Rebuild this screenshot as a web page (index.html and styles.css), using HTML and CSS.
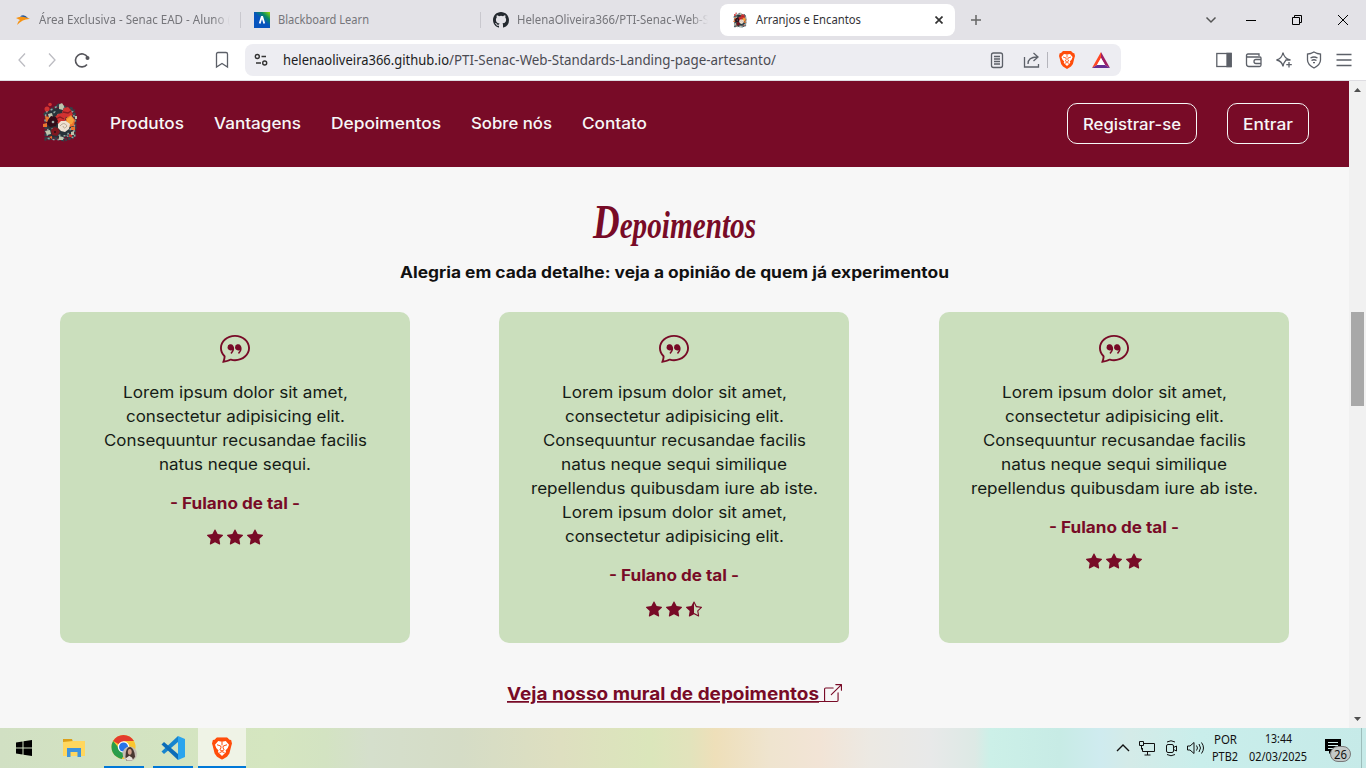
FILE: index.html
```html
<!DOCTYPE html>
<html lang="pt-BR">
<head>
<meta charset="utf-8">
<title>Arranjos e Encantos</title>
<link rel="stylesheet" href="styles.css">
</head>
<body>
<svg class="defs" width="0" height="0">
  <symbol id="quote" viewBox="0 0 16 16"><path d="M2.678 11.894a1 1 0 0 1 .287.801 11 11 0 0 1-.398 2c1.395-.323 2.247-.697 2.634-.893a1 1 0 0 1 .71-.074A8 8 0 0 0 8 14c3.996 0 7-2.807 7-6s-3.004-6-7-6-7 2.808-7 6c0 1.468.617 2.83 1.678 3.894m-.493 3.905a22 22 0 0 1-.713.129c-.2.032-.352-.176-.273-.362a10 10 0 0 0 .244-.637l.003-.01c.248-.72.45-1.548.524-2.319C.743 11.37 0 9.76 0 8c0-3.866 3.582-7 8-7s8 3.134 8 7-3.582 7-8 7a9 9 0 0 1-2.347-.306c-.52.263-1.639.742-3.468 1.105"/><path d="M7.066 6.76A1.665 1.665 0 0 0 4 7.668a1.667 1.667 0 0 0 2.561 1.406c-.131.389-.375.804-.777 1.22a.417.417 0 0 0 .6.58c1.486-1.54 1.293-3.214.682-4.112zm4 0A1.665 1.665 0 0 0 8 7.668a1.667 1.667 0 0 0 2.561 1.406c-.131.389-.375.804-.777 1.22a.417.417 0 0 0 .6.58c1.486-1.54 1.293-3.214.682-4.112z"/></symbol>
  <symbol id="star" viewBox="0 0 16 16"><path d="M3.612 15.443c-.386.198-.824-.149-.746-.592l.83-4.73L.173 6.765c-.329-.314-.158-.888.283-.95l4.898-.696L7.538.792c.197-.39.73-.39.927 0l2.184 4.327 4.898.696c.441.062.612.636.282.95l-3.522 3.356.83 4.73c.078.443-.36.79-.746.592L8 13.187l-4.389 2.256z"/></symbol>
  <symbol id="half" viewBox="0 0 16 16"><path d="M5.354 5.119 7.538.792A.52.52 0 0 1 8 .5c.183 0 .366.097.465.292l2.184 4.327 4.898.696A.54.54 0 0 1 16 6.32a.55.55 0 0 1-.17.445l-3.523 3.356.83 4.73c.078.443-.36.79-.746.592L8 13.187l-4.389 2.256a.5.5 0 0 1-.146.05c-.342.06-.668-.254-.6-.642l.83-4.73L.173 6.765a.55.55 0 0 1-.172-.403.6.6 0 0 1 .085-.302.51.51 0 0 1 .37-.245zM8 12.027a.5.5 0 0 1 .232.056l3.686 1.894-.694-3.957a.56.56 0 0 1 .162-.505l2.907-2.77-4.052-.576a.53.53 0 0 1-.393-.288L8.001 2.223 8 2.226z"/></symbol>
  <symbol id="brave" viewBox="0 0 16 18"><path fill="#ff4d0b" d="M4 0h8l2 2 1.300.2L16 5l-.6 2-1.500 6L12 15.500 8 18l-4-2.500L2.100 13 .6 7 0 5l.7-2.800L2 2z"/><path fill="#fff" d="M5 3l3 .6L11 3l2.600 3-1 2.500-1.800 2 .5 1.200L8 15l-3.300-3.300.5-1.200-1.800-2-1-2.500z"/><path fill="none" stroke="#ff4d0b" stroke-width=".8" d="M4 6l3 1 .2 1.500L6.300 10 8 11l1.700-1-.9-1.500L9 7l3-1M6 12.300l2-.8 2 .8M8 3.500v3"/></symbol>
  <symbol id="bouquet" viewBox="0 0 36 40">
    <g fill="none" stroke="#31444a" stroke-width="3" stroke-dasharray="3 1 2 1"><path d="M3 12l6-4 8-5 7 3 7 1 2 8v10l-1 10-10 3-9-2-9 1V15z"/></g>
    <path fill="#273239" d="M6 9l10-3 14 2 2 12-2 14-12 2-13-2z"/>
    <g fill="none" stroke="#8fa5a0" stroke-width="1.500" stroke-dasharray="2 3"><path d="M4 10l7-3 8-5 4 5 8 3 2 8-1 10 1 8-8-2-5 3-7 1-8-2 1-8-3-8zM7 13l6-3 10 8 6 8-4 8-10-1-7-9"/></g>
    <g fill="#d13231"><circle cx="5" cy="7" r="2.500"/><circle cx="8" cy="2.500" r="1.800"/><path d="M13 15l3-3 4-1 4 3-1 6-6 2-4-3zM20 10l2-4 4-1 3 3 2 5-4 3-5-2z"/><path d="M27 32h3v3h-3z"/></g>
    <path d="M14 17l4-2 4 2m-1-7l5 1 3-2" stroke="#861c22" stroke-width="1.300" fill="none"/>
    <g fill="#bfc4ad"><path d="M17 3l3-2 2 3-1 4-4-1zM6 12l4-1 1 4-4 1zM3 29l5-1 1 4-4 1zM17 34l4 1v3h-4zM33 14h2v3h-2zM29 30l3-1v4h-3z"/></g>
    <g fill="#ed742d"><path d="M3 14l4 1 1 4-4 1zM1 22l4-1v4H1zM24 16l5-3 4 5-1 6-5 1-3-4zM29 25h4v3h-4zM7 35l3-1v3z"/></g>
    <path fill="#f5a43b" d="M25 17l4-3 3 4-2 4-5 1z"/>
    <path fill="#310c18" d="M6 18l3-4 5 1 2 4-2 5-6 1-3-3z"/><path fill="#7d1820" d="M9 28l3-3 4 1 2 4-3 4-5-1z"/><circle cx="11" cy="20" r="1.300" fill="#9eaaa5"/><circle cx="13" cy="30" r="1" fill="#291015"/>
    <path fill="#ede1d2" d="M16 22l3-3 5 0 4 3-1 5-4 3-4-1-3-3z"/><path d="M18 24q4-5 7 0-3 4-4 0" fill="none" stroke="#b9a996"/>
  </symbol>
</svg>

<div class="tabstrip">
  <div class="tab first">
    <svg width="16" height="16" viewBox="0 0 16 16"><path fill="#f69314" d="M1 6q8-3 14 1-7-.5-13 6 1-4 3-5z"/><path fill="#28599a" d="M5 4.500q4-3 8 1.500-4-1.500-8-1.500"/></svg>
    <span class="clip"><svg class="ui" width="192" height="16"><text y="12" textLength="192" lengthAdjust="spacingAndGlyphs">Área Exclusiva - Senac EAD - Aluno (</text></svg></span>
  </div>
  <div class="tab">
    <svg width="16" height="16" viewBox="0 0 16 16"><defs><linearGradient id="bb" x1="1" y1="0" x2=".3" y2=".8"><stop offset="0" stop-color="#9bdc00"/><stop offset=".35" stop-color="#078b62"/><stop offset=".65" stop-color="#0754bd"/></linearGradient></defs><path fill="url(#bb)" d="M0 0h16v16H0z"/><path fill="none" stroke="#fff" stroke-width="1.800" d="M5.700 11.500l2-6.500h.6l2 6.500"/></svg>
    <svg class="ui" width="91" height="16"><text y="12" textLength="91" lengthAdjust="spacingAndGlyphs">Blackboard Learn</text></svg>
  </div>
  <div class="tab third">
    <svg width="16" height="16" viewBox="0 0 16 16" fill="#24292f"><path d="M8 0C3.580 0 0 3.580 0 8c0 3.540 2.290 6.530 5.470 7.590.4.070.55-.17.55-.38 0-.19-.01-.82-.01-1.490-2.010.37-2.530-.49-2.690-.94-.09-.23-.48-.94-.82-1.130-.28-.15-.68-.52-.01-.53.63-.01 1.080.58 1.230.82.72 1.210 1.870.87 2.330.66.070-.52.28-.87.51-1.070-1.780-.2-3.640-.89-3.640-3.950 0-.87.31-1.590.82-2.150-.08-.2-.36-1.020.08-2.120 0 0 .67-.21 2.200.82a7.600 7.600 0 0 1 4 0c1.530-1.040 2.200-.82 2.200-.82.44 1.100.16 1.920.08 2.120.51.56.82 1.270.82 2.150 0 3.070-1.870 3.750-3.650 3.950.29.25.54.73.54 1.480 0 1.070-.01 1.930-.01 2.200 0 .21.15.46.55.38A8 8 0 0 0 16 8c0-4.420-3.580-8-8-8"/></svg>
    <span class="clip"><svg class="ui" width="192" height="16"><text y="12" textLength="192" lengthAdjust="spacingAndGlyphs">HelenaOliveira366/PTI-Senac-Web-S</text></svg></span>
  </div>
  <div class="tab active">
    <svg width="14" height="16"><use href="#bouquet"/></svg>
    <svg class="ui" width="105" height="16"><text y="12" textLength="105" lengthAdjust="spacingAndGlyphs">Arranjos e Encantos</text></svg>
    <svg class="tabclose" width="8" height="8"><path d="M.5.500l7 7m0-7l-7 7" stroke="#333" stroke-width="1.700"/></svg>
  </div>
  <svg class="plus" width="12" height="12"><path d="M6 1v10M1 6h10" stroke="#666" stroke-width="1.500"/></svg>
  <div class="wincontrols">
    <svg width="34" height="20" fill="none" stroke="#555" stroke-width="1.500"><path d="M12.500 7.500l4.500 4.500 4.500-4.500"/></svg>
    <svg width="46" height="20"><path d="M18 10.500h10" stroke="#000"/></svg>
    <svg width="46" height="20" fill="none" stroke="#000"><path d="M18.500 7.500h7v7h-7zM20.500 7v-1.500h7v7H26"/></svg>
    <svg width="46" height="20" stroke="#000"><path d="M18 5l10 10m0-10L18 15"/></svg>
  </div>
</div>

<div class="toolbar">
  <div class="history">
    <svg width="24" height="24"><path d="M15 5.500L9 12l6 6.500"/></svg>
    <svg width="24" height="24"><path d="M9 5.500l6 6.500-6 6.500"/></svg>
    <svg class="reload" width="24" height="24"><path d="M17 16.500A6.500 6.500 0 1 1 17.500 9"/><circle cx="17.500" cy="10" r="2" fill="#55555b" stroke="none"/></svg>
  </div>
  <svg class="bookmark" width="24" height="24"><path d="M6.500 6Q6.500 4.500 8 4.500h8q1.500 0 1.500 1.500v13L12 15.500 6.500 19z"/></svg>
  <div class="address">
    <svg width="16" height="16" viewBox="0 0 16 16"><g stroke="#333" stroke-width="1.400"><circle cx="4.300" cy="4.500" r="2"/><circle cx="11.700" cy="11" r="2"/><path d="M8.500 4.500H13M3 11h5"/></g></svg>
    <svg class="url" width="493" height="20"><text y="15" textLength="166" lengthAdjust="spacingAndGlyphs">helenaoliveira366.github.io</text><text class="path" x="166" y="15" textLength="327" lengthAdjust="spacingAndGlyphs">/PTI-Senac-Web-Standards-Landing-page-artesanto/</text></svg>
    <div class="pageactions">
      <svg width="24" height="24"><rect x="6.500" y="5" width="11" height="14.500" rx="2"/><path d="M9 8.500h6M9 11h6M9 13.500h6M9 16h6"/></svg>
      <svg width="24" height="24"><path d="M4.500 9v10h14v-3M8 16q0-7 9-7M13.500 5l4.500 4-4.500 4"/></svg>
      <i class="vr"></i>
      <svg class="flat bravelogo" width="16" height="18"><use href="#brave"/></svg>
      <svg class="flat" width="18" height="16"><path fill="#ff4724" d="M9 0L0 16l5-3 4-7z"/><path fill="#9e1f63" d="M9 0l9 16-5-3-4-7z"/><path fill="#662d91" d="M0 16h18l-5-3H5z"/><path fill="#fff" d="M9 6l4 7H5z"/></svg>
    </div>
  </div>
  <div class="extras">
    <svg width="24" height="24"><rect x="4.800" y="5.500" width="14.400" height="13"/><path fill="#5c6068" d="M15 5.500h4v13h-4z"/></svg>
    <svg width="24" height="24"><path d="M17 8V6H6Q4.500 6 4.500 7.500T6 9h12q1 0 1 1v7q0 1.500-1.500 1.500H7q-2.500 0-2.500-2.500V7.500M19 11.500h-5a2 2 0 0 0 0 4h5"/></svg>
    <svg width="24" height="24"><path d="M11 4.500q1 6 7.500 7.500H14l-1 1.500q-1.500 1.500-2 5-1-5.500-6.500-6.500Q10 10.500 11 4.500M17 14v5.500M14.300 16.700h5.500"/></svg>
    <svg width="24" height="24"><path d="M12 4l3.500 1.500 3 .5v6q0 4.500-6.500 8-6.500-3.500-6.500-8V6l3-.5zM8.500 10q3.500-2 7 0M9.500 12.500q2.500-1.500 5 0M11 14.700h2"/></svg>
    <svg width="24" height="24"><path d="M4.500 6.500h15M4.500 12h15M4.500 17.500h15"/></svg>
  </div>
</div>

<div class="viewport">
  <div class="page">
    <nav class="nav">
      <svg class="logo" width="36" height="40"><use href="#bouquet"/></svg>
      <div class="links">
        <svg class="m medium" width="74" height="24"><text y="17" textLength="74" lengthAdjust="spacingAndGlyphs">Produtos</text></svg>
        <svg class="m medium" width="87" height="24"><text y="17" textLength="87" lengthAdjust="spacingAndGlyphs">Vantagens</text></svg>
        <svg class="m medium" width="110" height="24"><text y="17" textLength="110" lengthAdjust="spacingAndGlyphs">Depoimentos</text></svg>
        <svg class="m medium" width="81" height="24"><text y="17" textLength="81" lengthAdjust="spacingAndGlyphs">Sobre nós</text></svg>
        <svg class="m medium" width="65" height="24"><text y="17" textLength="65" lengthAdjust="spacingAndGlyphs">Contato</text></svg>
      </div>
      <a class="btn"><svg class="m medium" width="98" height="24"><text y="18" textLength="98" lengthAdjust="spacingAndGlyphs">Registrar-se</text></svg></a>
      <a class="btn last"><svg class="m medium" width="50" height="24"><text y="18" textLength="50" lengthAdjust="spacingAndGlyphs">Entrar</text></svg></a>
    </nav>
    <main>
      <svg class="title" width="168" height="60"><text x="2" y="44" textLength="163" lengthAdjust="spacingAndGlyphs"><tspan class="initial">D</tspan>epoimentos</text></svg>
      <svg class="m bold subtitle" width="549" height="24"><text y="17" textLength="549" lengthAdjust="spacingAndGlyphs">Alegria em cada detalhe: veja a opinião de quem já experimentou</text></svg>
      <div class="cards">
        <article class="card">
          <svg class="quote" width="30" height="30"><use href="#quote"/></svg>
          <div class="copy">
            <svg class="m" width="225" height="24"><text y="17" textLength="225" lengthAdjust="spacingAndGlyphs">Lorem ipsum dolor sit amet,</text></svg>
            <svg class="m" width="219" height="24"><text y="17" textLength="219" lengthAdjust="spacingAndGlyphs">consectetur adipisicing elit.</text></svg>
            <svg class="m" width="263" height="24"><text y="17" textLength="263" lengthAdjust="spacingAndGlyphs">Consequuntur recusandae facilis</text></svg>
            <svg class="m" width="152" height="24"><text y="17" textLength="152" lengthAdjust="spacingAndGlyphs">natus neque sequi.</text></svg>
          </div>
          <svg class="m bold author" width="130" height="24"><text y="17" textLength="130" lengthAdjust="spacingAndGlyphs">- Fulano de tal -</text></svg>
          <div class="stars"><svg><use href="#star"/></svg><svg><use href="#star"/></svg><svg><use href="#star"/></svg></div>
        </article>
        <article class="card">
          <svg class="quote" width="30" height="30"><use href="#quote"/></svg>
          <div class="copy">
            <svg class="m" width="225" height="24"><text y="17" textLength="225" lengthAdjust="spacingAndGlyphs">Lorem ipsum dolor sit amet,</text></svg>
            <svg class="m" width="219" height="24"><text y="17" textLength="219" lengthAdjust="spacingAndGlyphs">consectetur adipisicing elit.</text></svg>
            <svg class="m" width="263" height="24"><text y="17" textLength="263" lengthAdjust="spacingAndGlyphs">Consequuntur recusandae facilis</text></svg>
            <svg class="m" width="226" height="24"><text y="17" textLength="226" lengthAdjust="spacingAndGlyphs">natus neque sequi similique</text></svg>
            <svg class="m" width="287" height="24"><text y="17" textLength="287" lengthAdjust="spacingAndGlyphs">repellendus quibusdam iure ab iste.</text></svg>
            <svg class="m" width="225" height="24"><text y="17" textLength="225" lengthAdjust="spacingAndGlyphs">Lorem ipsum dolor sit amet,</text></svg>
            <svg class="m" width="219" height="24"><text y="17" textLength="219" lengthAdjust="spacingAndGlyphs">consectetur adipisicing elit.</text></svg>
          </div>
          <svg class="m bold author" width="130" height="24"><text y="17" textLength="130" lengthAdjust="spacingAndGlyphs">- Fulano de tal -</text></svg>
          <div class="stars"><svg><use href="#star"/></svg><svg><use href="#star"/></svg><svg><use href="#half"/></svg></div>
        </article>
        <article class="card">
          <svg class="quote" width="30" height="30"><use href="#quote"/></svg>
          <div class="copy">
            <svg class="m" width="225" height="24"><text y="17" textLength="225" lengthAdjust="spacingAndGlyphs">Lorem ipsum dolor sit amet,</text></svg>
            <svg class="m" width="219" height="24"><text y="17" textLength="219" lengthAdjust="spacingAndGlyphs">consectetur adipisicing elit.</text></svg>
            <svg class="m" width="263" height="24"><text y="17" textLength="263" lengthAdjust="spacingAndGlyphs">Consequuntur recusandae facilis</text></svg>
            <svg class="m" width="226" height="24"><text y="17" textLength="226" lengthAdjust="spacingAndGlyphs">natus neque sequi similique</text></svg>
            <svg class="m" width="287" height="24"><text y="17" textLength="287" lengthAdjust="spacingAndGlyphs">repellendus quibusdam iure ab iste.</text></svg>
          </div>
          <svg class="m bold author" width="130" height="24"><text y="17" textLength="130" lengthAdjust="spacingAndGlyphs">- Fulano de tal -</text></svg>
          <div class="stars"><svg><use href="#star"/></svg><svg><use href="#star"/></svg><svg><use href="#star"/></svg></div>
        </article>
      </div>
      <a class="mural">
        <svg class="m bold" width="317" height="24"><text y="18" textLength="312" lengthAdjust="spacingAndGlyphs">Veja nosso mural de depoimentos</text><path d="M312 19.500h18"/></svg>
        <svg width="18" height="18" viewBox="0 0 16 16"><path d="M8.636 3.500a.5.5 0 0 0-.5-.5H1.500A1.500 1.500 0 0 0 0 4.500v10A1.500 1.500 0 0 0 1.500 16h10a1.500 1.500 0 0 0 1.500-1.500V7.864a.5.5 0 0 0-1 0V14.500a.5.5 0 0 1-.5.500h-10a.5.5 0 0 1-.5-.5v-10a.5.5 0 0 1 .5-.5h6.636a.5.5 0 0 0 .5-.5"/><path d="M16 .5a.5.5 0 0 0-.5-.5h-5a.5.5 0 0 0 0 1h3.793L6.146 9.146a.5.5 0 1 0 .708.708L15 1.707V5.500a.5.5 0 0 0 1 0z"/></svg>
      </a>
    </main>
  </div>
  <div class="scrollbar">
    <svg width="17" height="17"><path fill="#505050" d="M5 11h7L8.500 7z"/></svg>
    <div class="thumb"></div>
    <svg class="down" width="17" height="17"><path fill="#505050" d="M5 6h7l-3.500 4z"/></svg>
  </div>
</div>

<div class="taskbar">
  <div class="app"><svg width="16" height="16"><path d="M0 2.500l6.500-1v6H0zM7.500 1.300L16 0v7.500H7.500zM0 8.500h6.500v6L0 13.600zM7.500 8.500H16V16l-8.500-1.200z"/></svg></div>
  <div class="app"><svg width="22" height="20"><path fill="#dca018" d="M0 1h9l1 3H0z"/><path fill="#ffd75e" d="M0 4l10-1h12v15H0z"/><path fill="#3f94dc" d="M4 19v-9h14v9h-3.500v-5h-7v5z"/></svg></div>
  <div class="app open"><svg width="26" height="28" viewBox="0 0 27 28"><circle cx="13" cy="13" r="12.500" fill="#fbc62f"/><path fill="#e33b2e" d="M13 13L2.200 6.700A12.500 12.500 0 0 1 23.800 6.700H13z"/><path fill="#2a9d4b" d="M2.200 6.700A12.500 12.500 0 0 0 11 25.300l5-8-6-1z"/><circle cx="13" cy="13" r="6" fill="#fff"/><circle cx="13" cy="13" r="4.700" fill="#2874e8"/><circle cx="19.500" cy="20" r="7.500" fill="#c4bdb3"/><path fill="#493832" d="M15 23q0-10 5-10 4 1 5 10l-3 4h-6z"/><ellipse cx="19.500" cy="18" rx="2" ry="3" fill="#d0a18c"/><path fill="#e6e1da" d="M15 25l4-3 3 2 1 3h-6z"/></svg></div>
  <div class="app open"><svg width="24" height="24" viewBox="0 0 24 24"><path fill="#1684ce" d="M17 0v6L3 18l-2.500-2.500z"/><path fill="#0b6cb8" d="M3 6l14 12v6L.5 8.500z"/><path fill="#2aa4ee" d="M17 0l7 3v18l-7 3z"/></svg></div>
  <div class="app current"><svg width="20" height="23" viewBox="0 0 16 18"><use href="#brave"/></svg></div>
  <div class="tray">
    <svg width="24" height="24"><path d="M6 15l6-6 6 6" stroke-width="1.400"/></svg>
    <svg width="24" height="24"><path d="M8.500 7.500h11v8h-12V12M12.500 16v3m-3 0h6M4.500 5.500h4v4h-4zM6.500 9.500v4"/></svg>
    <svg width="24" height="24"><rect x="7.500" y="8.500" width="7" height="8" rx="1.500"/><path d="M14.500 11.500l3-1.500v5l-3-1.500M8 6q4-2.500 8 0M8 18.500q4 2.500 8 0"/></svg>
    <svg width="24" height="24"><path d="M4.500 10v4H7l4 3.500v-11L7 10zM13.500 9.500q2 2.500 0 5M16 8q3 4 0 8M18.500 6.500q4 5.500 0 11"/></svg>
    <div class="stack lang"><svg class="ui" width="23" height="18"><text y="14" textLength="23" lengthAdjust="spacingAndGlyphs">POR</text></svg><svg class="ui" width="26" height="18"><text y="13" textLength="26" lengthAdjust="spacingAndGlyphs">PTB2</text></svg></div>
    <div class="stack clock"><svg class="ui" width="27" height="18"><text y="13" textLength="27" lengthAdjust="spacingAndGlyphs">13:44</text></svg><svg class="ui" width="58" height="18"><text y="13" textLength="58" lengthAdjust="spacingAndGlyphs">02/03/2025</text></svg></div>
    <svg class="notice" width="28" height="26"><path fill="#000" stroke="none" d="M0 1h16v12H7l-3 3v-3H0z"/><path stroke="#d3efed" d="M3 4.500h10M3 7.500h10M3 10.500h6"/><rect x="5.500" y="8.500" width="20" height="15" rx="7.500" fill="#c3c9c8" stroke="#777"/><text x="9" y="20.500" textLength="13" lengthAdjust="spacingAndGlyphs">26</text></svg>
    <i class="peek"></i>
  </div>
</div>
</body>
</html>
```
FILE: styles.css
```css
* { box-sizing: border-box; }
body { margin: 0; width: 1366px; height: 768px; overflow: hidden; display: flex; flex-direction: column; background: #f7f7f7; font-family: "Noto Sans", "Open Sans", sans-serif; }
svg { display: block; flex: none; }
.defs { display: none; }

.ui { font: 12px "Noto Sans", sans-serif; fill: currentColor; overflow: visible; }
.m { font: 15.5px Inter, sans-serif; fill: currentColor; overflow: visible; }
.medium { font-weight: 500; }
.bold { font-weight: 700; }

.tabstrip { height: 40px; flex: none; background: #e3e2e7; display: flex; align-items: center; }
.tab { width: 240px; height: 32px; padding-left: 14px; display: flex; align-items: center; gap: 8px; color: #75757a; position: relative; }
.first { padding-left: 15px; }
.tab.third { padding-left: 13px; }
.tab:nth-child(-n+2)::after { content: ""; position: absolute; right: -1px; top: 8px; width: 1px; height: 16px; background: #c9c8ce; }
.clip { width: 191px; overflow: hidden; -webkit-mask-image: linear-gradient(90deg, #000 91%, transparent); }
.tab.active { width: 235px; padding-left: 13px; gap: 9px; background: #fff; border-radius: 8px; color: #333338; }
.tabclose { margin-left: auto; margin-right: 12px; }
.plus { margin-left: 15px; }
.wincontrols { display: flex; margin-left: auto; }

.toolbar { height: 41px; flex: none; background: #fff; border-bottom: 1px solid #dedde2; display: flex; align-items: center; padding: 0 10px; }
.toolbar svg { fill: none; stroke: #5c6068; stroke-width: 1.3; }
.toolbar .flat { stroke: none; }
.history { display: flex; gap: 6px; }
.toolbar .history svg { stroke: #bcbcc2; }
.toolbar .history .reload { stroke: #55555b; stroke-width: 1.6; }
.bookmark { margin-left: 116px; }
.address { margin-left: 11px; width: 876px; height: 32px; border-radius: 8px; background: #ededf2; display: flex; align-items: center; padding: 0 11px 0 8px; }
.toolbar .url { margin-left: 14px; font: 14px "Noto Sans", sans-serif; fill: #1c1c22; stroke: none; overflow: visible; }
.url .path { fill: #4b4b52; }
.pageactions { margin-left: auto; display: flex; align-items: center; }
.pageactions svg:nth-child(2) { margin-left: 11px; }
.vr { width: 1px; height: 16px; background: #b5b5bc; margin: 0 11px 0 3px; }
.bravelogo { margin-right: 17px; }
.extras { margin-left: auto; display: flex; gap: 6px; }

.viewport { flex: 1; display: flex; min-height: 0; }
.page { width: 1349px; background: #f7f7f7; }
.nav { height: 86px; background: #780b27; color: #f7f7f7; display: flex; align-items: center; padding: 0 40px 0 42px; }
.logo { margin-top: -4px; }
.links { display: flex; gap: 30px; margin-left: 32px; margin-right: auto; }
.btn { width: 130px; height: 41px; margin-top: -1px; border: 1px solid #f7f7f7; border-radius: 10px; display: flex; align-items: center; justify-content: center; }
.btn.last { width: 82px; margin-left: 30px; }

main { display: flex; flex-direction: column; align-items: center; color: #780b27; fill: #780b27; padding-top: 27px; }
.title { font: italic bold 38px "Liberation Serif", serif; overflow: visible; }
.initial { font-size: 48px; }
.subtitle { color: #111; margin-top: 7px; }
.cards { display: grid; grid-template-columns: 439px 440px 350px; width: 1229px; margin: 27px 60px 0; }
.card { width: 350px; height: 331px; border-radius: 10px; background: #cbdfbd; display: flex; flex-direction: column; align-items: center; padding-top: 21px; }
.copy { color: #151b16; margin-top: 18px; display: flex; flex-direction: column; align-items: center; }
.author { margin-top: 15px; }
.stars { display: flex; gap: 4px; margin-top: 13px; }
.stars svg { width: 16px; height: 16px; }
.mural { display: flex; margin-top: 39px; height: 24px; }
.mural .m { font-size: 17.5px; text-decoration: underline; }
.mural .m path { stroke: #780b27; }
.mural svg:last-child { margin-top: 2px; }

.scrollbar { width: 17px; background: #f1f1f1; display: flex; flex-direction: column; }
.thumb { width: 13px; height: 94px; margin: 214px 2px 0; background: #a8a8a8; }
.down { margin-top: auto; }

.taskbar { height: 40px; flex: none; display: flex; background: linear-gradient(90deg, #d1e0c3 0, #d5e6c0 270px, #d3e3c2 325px, #d5dfcc 370px, #d5dcc6 460px, #dedfc0 560px, #dbe6bb 650px, #e2e3bc 690px, #eedfb9 715px, #efe4cf 770px, #f2e4d6 820px, #ece9e3 870px, #e8e9e9 930px, #dde9e5 975px, #ccf0e8 990px, #c7ebe5 1060px, #cfebef 1100px, #d4ebe8 1130px, #c9eeeb 1200px, #c6eae8 1366px); }
.app { width: 48px; margin-right: 1px; display: flex; align-items: center; justify-content: center; position: relative; }
.app:nth-child(1), .app:nth-child(2) { margin-right: 2px; }
.open::after, .current::after { content: ""; position: absolute; bottom: 0; width: 40px; height: 2px; background: #0078d7; }
.current { background: #eff3e6; }
.current::after { width: 48px; }
.tray { margin-left: auto; width: 255px; display: flex; align-items: center; color: #111; }
.tray svg { fill: none; stroke: #111; }
.tray .ui { fill: #111; stroke: none; }
.stack { display: flex; flex-direction: column; align-items: center; }
.lang { margin-left: 5px; }
.clock { margin-left: 11px; }
.notice { margin: 6px 0 0 18px; }
.tray .notice text { font: 12px "Noto Sans", sans-serif; fill: #111; stroke: none; }
.peek { margin: 0 4px 0 auto; width: 1px; align-self: stretch; background: #9dbdbb; }
```
